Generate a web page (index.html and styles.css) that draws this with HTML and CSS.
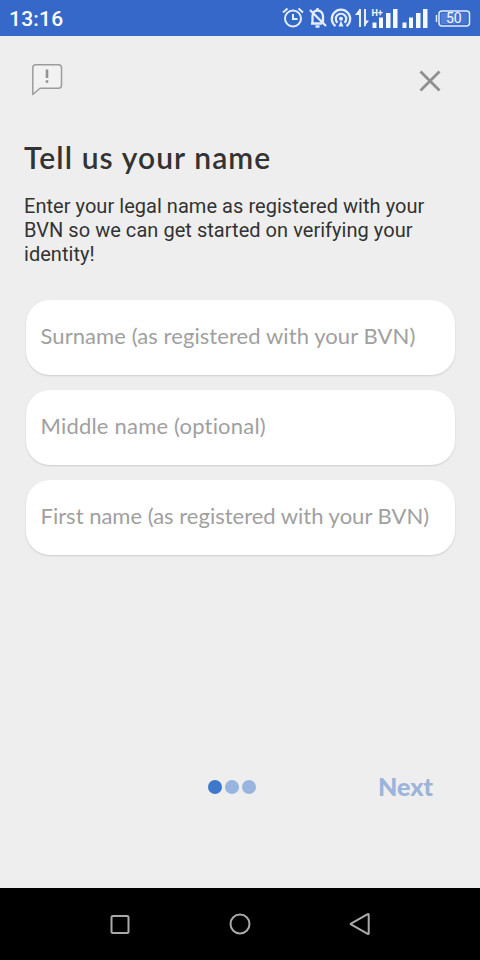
FILE: index.html
```html
<!DOCTYPE html>
<html lang="en">
<head>
<meta charset="utf-8">
<meta name="viewport" content="width=device-width, initial-scale=1">
<title>Tell us your name</title>
<link rel="stylesheet" href="styles.css">
</head>
<body>
<div class="screen">
  <header class="status">
    <span class="clock">13:16</span>
    <svg class="status-icons" width="194" height="36" viewBox="280 0 194 36" fill="none" stroke="#e3edff" stroke-width="2">
      <circle cx="293" cy="18.500" r="8"/>
      <path d="M293 14v5h4.500M283 12.500l4.500-4M303 12.500l-4.500-4"/>
      <path d="M312.500 23V16c0-3 2-5.500 5-5.500s5.500 2.500 5.500 5.500v6M311 23.500h11M310 10l16 16M317.500 8v2" stroke-width="2.300"/>
      <path d="M315.500 26.500h4" stroke-width="2.500"/>
      <path d="M335.500 26.200a9.200 9.200 0 1 1 11 0M337.500 22.800a5.200 5.200 0 1 1 7 0" stroke-width="2.200"/>
      <circle cx="341" cy="18.800" r="2" fill="#e3edff" stroke="none"/>
      <path d="M338.500 26.500l2.500-6 2.500 6z" fill="#e3edff" stroke="none"/>
      <path d="M360 27V8.500l-5 6.500h4v12zM364 9v18l5-6.500h-3V9z" fill="#f4f8ff" stroke="none"/>
      <path d="M360 9v18M365 9v17"/>
      <text class="network" x="371.500" y="15.500">H+</text>
      <g fill="#f4f8ff" stroke="none">
        <path d="M372.500 22.500h4V28h-4zM379 17.500h4V28h-4zM386 13h4.500v15H386zM393 9h4.500v19H393z"/>
        <path d="M402.500 22.500h4V28h-4zM409 17.500h4V28h-4zM416 13h4.500v15H416zM423 9h4.500v19H423z"/>
      </g>
      <rect x="439" y="11" width="30.500" height="15" rx="3" stroke-width="1.500"/>
      <path d="M436.500 15v7" stroke-width="1.500"/>
      <rect x="441" y="13" width="26" height="11" fill="#4474d0" stroke="none"/>
      <rect x="441" y="13" width="14" height="11" fill="#527fd5" stroke="none"/>
      <text class="battery" x="446" y="23">50</text>
    </svg>
  </header>

  <main class="content">
    <div class="toolbar">
      <button class="icon-button" type="button" aria-label="Feedback">
        <svg width="32" height="34" viewBox="31 63 32 34" fill="none">
          <path d="M36 64.800h22.500a3 3 0 0 1 3 3v17.500a3 3 0 0 1-3 3H40l-7.200 6.200V67.800a3 3 0 0 1 3-3z" fill="#f2f2f2" stroke="#9c9c9c" stroke-width="1.500" stroke-linejoin="round"/>
          <path d="M47 69.500v8.500M47 80.200v2.600" stroke="#929292" stroke-width="2.600"/>
        </svg>
      </button>
      <button class="icon-button" type="button" aria-label="Close">
        <svg width="24" height="34" viewBox="418 63 24 34" fill="none" stroke="#8f8f8f" stroke-width="2.800">
          <path d="M420.500 71.500l19 19M439.500 71.500l-19 19"/>
        </svg>
      </button>
    </div>
    <h1 class="title">Tell us your name</h1>
    <p class="intro">Enter your legal name as registered with your BVN so we can get started on verifying your identity!</p>
    <form class="fields">
      <input class="field surname" type="text" placeholder="Surname (as registered with your BVN)">
      <input class="field middle" type="text" placeholder="Middle name (optional)">
      <input class="field first" type="text" placeholder="First name (as registered with your BVN)">
    </form>
    <footer class="pager">
      <div class="dots"><i class="dot active"></i><i class="dot"></i><i class="dot"></i></div>
      <button class="next" type="button">Next</button>
    </footer>
  </main>

  <nav class="navbar">
    <svg width="24" height="24" viewBox="0 0 24 24"><rect x="3.500" y="4" width="17" height="17" rx="1.500"/></svg>
    <svg width="24" height="24" viewBox="0 0 24 24"><circle cx="12" cy="12" r="9.500"/></svg>
    <svg width="24" height="24" viewBox="0 0 24 24"><path d="M20.700 2.800v18.400q0 1.200-1 .6L3 12.400q-.7-.4 0-.8l16.700-9.400q1-.6 1 .6z"/></svg>
  </nav>
</div>
</body>
</html>
```
FILE: styles.css
```css
* { box-sizing: border-box; }
body { margin: 0; background: #eee; }
button { padding: 0; border: 0; background: none; }
svg { display: block; }

.screen {
  display: flex;
  flex-direction: column;
  width: 480px;
  height: 960px;
  background: #eee;
  font-family: Roboto, sans-serif;
}

.status {
  display: flex;
  align-items: center;
  justify-content: space-between;
  height: 36px;
  padding: 0 6px 0 9px;
  background: #3568c9;
}
.clock {
  padding-top: 2px;
  color: #fff;
  font-size: 21px;
  font-weight: 500;
  letter-spacing: 0.2px;
}
.status-icons text { fill: #f4f8ff; stroke: none; font-family: Roboto, sans-serif; }
.network { font-size: 9px; font-weight: 700; }
.battery { font-size: 14px; }

.content {
  display: flex;
  flex: 1;
  flex-direction: column;
  padding: 27px 24px 0;
}
.toolbar {
  display: flex;
  justify-content: space-between;
  height: 34px;
  padding: 0 14px 0 7px;
}
.title {
  margin: 40px 0 0;
  color: #333;
  font: 600 30px/40px Lato, sans-serif;
  letter-spacing: 1.1px;
  white-space: nowrap;
}
.intro {
  margin: 17px 0 0;
  color: #333;
  font-size: 20px;
  line-height: 24px;
  letter-spacing: 0.04px;
}
.fields {
  display: flex;
  flex-direction: column;
  gap: 15px;
  margin: 34px 1.5px 0;
}
.field {
  width: 100%;
  height: 75px;
  padding: 0 15px 4px;
  border: 0;
  border-radius: 24px;
  outline: 0;
  background: #fff;
  box-shadow: 0 1px 2px rgba(0, 0, 0, 0.14);
  color: #333;
  font: 400 22px Lato, sans-serif;
  font-variant-ligatures: none;
}
.field::placeholder { color: #a0a0a0; opacity: 1; }
.surname { letter-spacing: 0.08px; }
.middle { letter-spacing: 0.2px; }

.pager {
  display: grid;
  grid-template-columns: 1fr auto 1fr;
  align-items: center;
  height: 40px;
  margin-top: 212px;
}
.dots {
  display: flex;
  grid-column: 2;
  gap: 3px;
  margin-right: 16px;
}
.dot {
  width: 14px;
  height: 14px;
  border-radius: 50%;
  background: #97b5de;
}
.dot.active { background: #3e78cb; }
.next {
  justify-self: end;
  margin: 0 23px 2px 0;
  color: #9ab4da;
  font: 900 25px/32px Lato, sans-serif;
}

.navbar {
  display: flex;
  align-items: center;
  justify-content: center;
  gap: 96px;
  height: 72px;
  background: #000;
}
.navbar svg { fill: none; stroke: #aaa; stroke-width: 2; }
```
